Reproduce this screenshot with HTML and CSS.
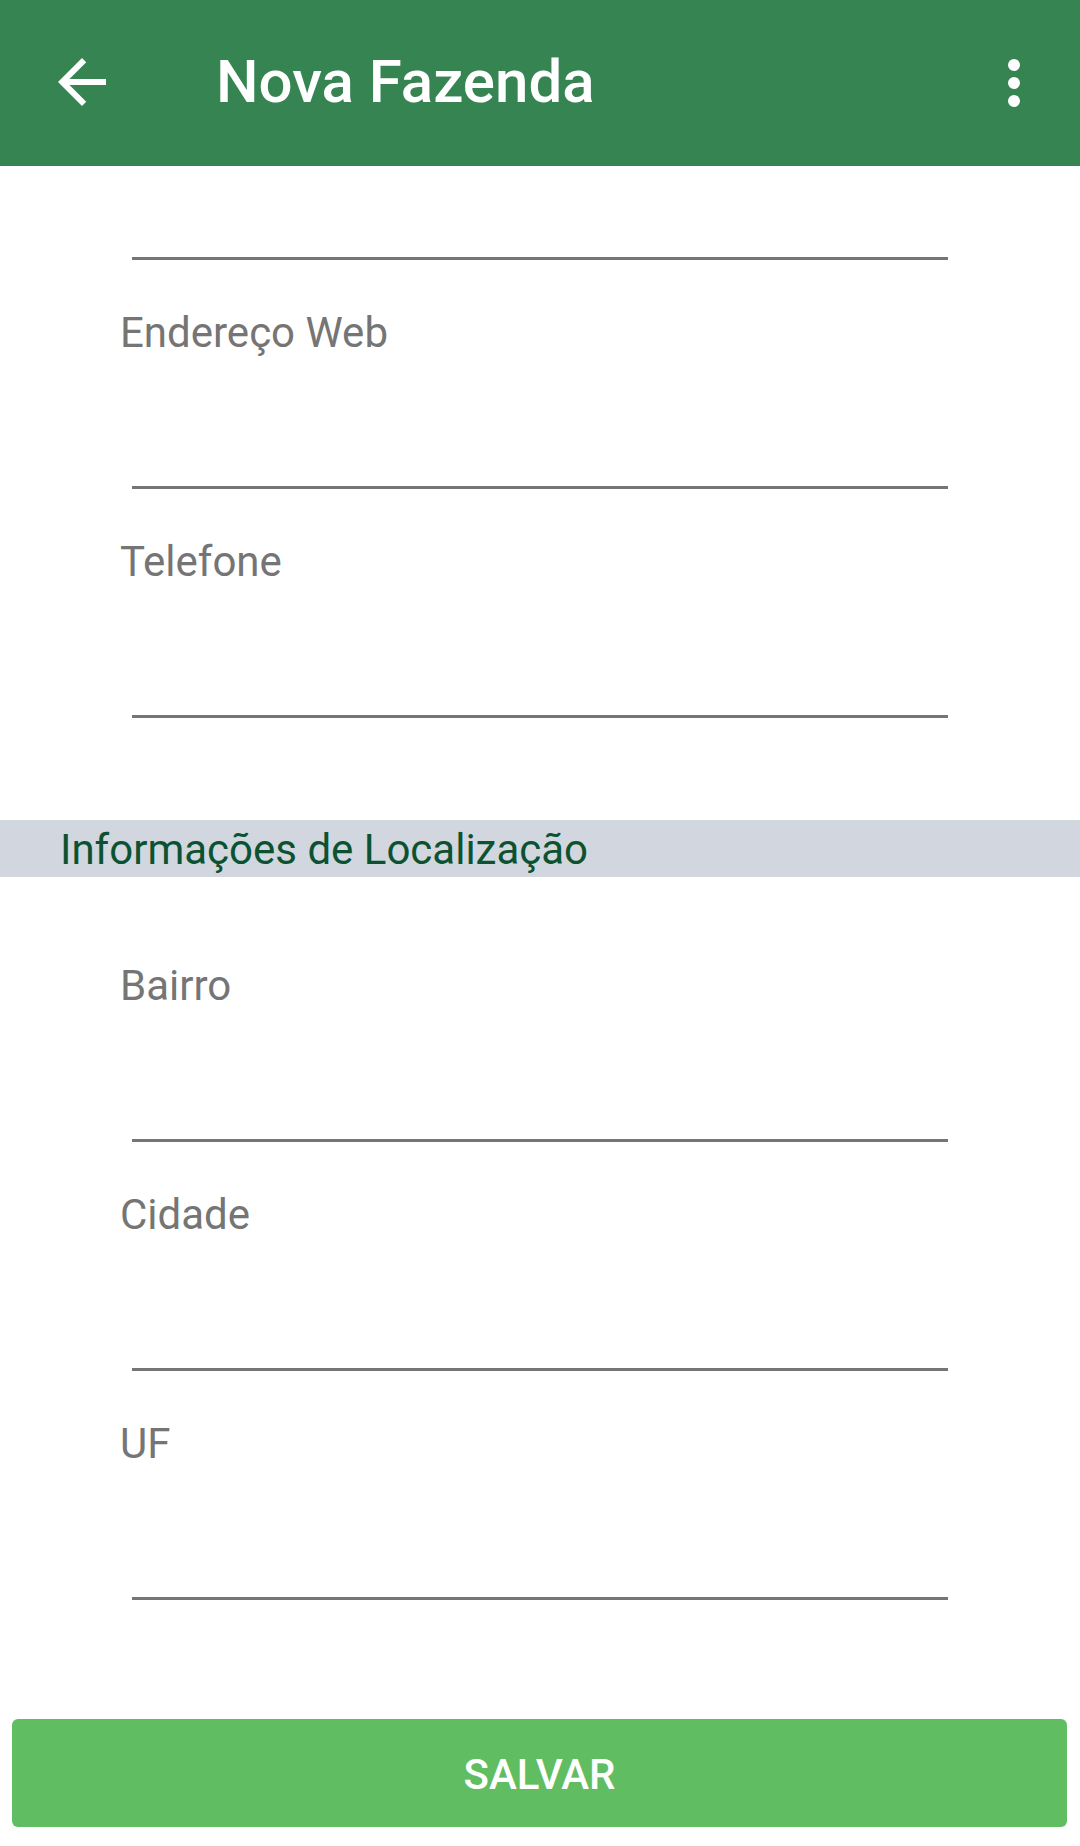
FILE: index.html
```html
<!DOCTYPE html>
<html lang="pt">
<head>
<meta charset="utf-8">
<title>Nova Fazenda</title>
<link rel="stylesheet" href="styles.css">
</head>
<body>
<div class="screen">
  <header class="toolbar">
    <svg class="icon back" viewBox="0 0 24 24" aria-hidden="true"><path d="M20 11H7.83l5.59-5.59L12 4l-8 8 8 8 1.41-1.41L7.83 13H20v-2z" fill="#fff"/></svg>
    <h1 class="title">Nova Fazenda</h1>
    <svg class="icon more" viewBox="0 0 24 24" aria-hidden="true"><circle cx="12" cy="6" r="2" fill="#fff"/><circle cx="12" cy="12" r="2" fill="#fff"/><circle cx="12" cy="18" r="2" fill="#fff"/></svg>
  </header>

  <main class="form">
    <div class="underline first"></div>

    <div class="field">
      <div class="label">Endereço Web</div>
      <div class="underline"></div>
    </div>

    <div class="field">
      <div class="label">Telefone</div>
      <div class="underline"></div>
    </div>

    <div class="section">Informações de Localização</div>

    <div class="field after-section">
      <div class="label">Bairro</div>
      <div class="underline"></div>
    </div>

    <div class="field">
      <div class="label">Cidade</div>
      <div class="underline"></div>
    </div>

    <div class="field">
      <div class="label">UF</div>
      <div class="underline"></div>
    </div>

    <button class="save">SALVAR</button>
  </main>
</div>
</body>
</html>
```

FILE: styles.css
```css
* { box-sizing: border-box; }

html, body {
  margin: 0;
  padding: 0;
  background: #ffffff;
}

body {
  font-family: Roboto, "Noto Sans", "Liberation Sans", sans-serif;
  width: 1080px;
  height: 1846px;
  overflow: hidden;
}

.screen {
  display: flex;
  flex-direction: column;
  width: 1080px;
}

.toolbar {
  height: 166px;
  background: #378453;
  display: flex;
  align-items: center;
  padding-left: 46px;
  padding-right: 30px;
}

.icon {
  width: 72px;
  height: 72px;
  flex: none;
  display: block;
}

.icon.back {
  margin-top: -3px;
}

.title {
  margin: 0 0 0 98px;
  flex: 1;
  color: #ffffff;
  font-size: 60px;
  font-weight: 500;
  line-height: 70px;
  margin-top: -2px;
}

.form {
  display: flex;
  flex-direction: column;
}

.underline {
  height: 3px;
  background: #757575;
  margin-left: 132px;
  width: 816px;
}

.underline.first {
  margin-top: 91px;
}

.field {
  display: flex;
  flex-direction: column;
  padding-top: 48px;
}

.field.after-section {
  padding-top: 84px;
}

.label {
  height: 50px;
  line-height: 50px;
  font-size: 42px;
  color: #757575;
  padding-left: 120px;
  margin-bottom: 128px;
}

.section {
  margin-top: 102px;
  height: 57px;
  background: #d1d6df;
  color: #0c5231;
  font-size: 42px;
  line-height: 55px;
  padding-top: 2px;
  padding-left: 60px;
}

.save {
  margin: 119px 13px 0 12px;
  height: 108px;
  border: none;
  border-radius: 6px;
  background: #61bd61;
  color: #ffffff;
  font-family: Roboto, "Noto Sans", "Liberation Sans", sans-serif;
  font-size: 42px;
  font-weight: 500;
  letter-spacing: 0;
  padding: 0;
  padding-top: 2px;
}
```
